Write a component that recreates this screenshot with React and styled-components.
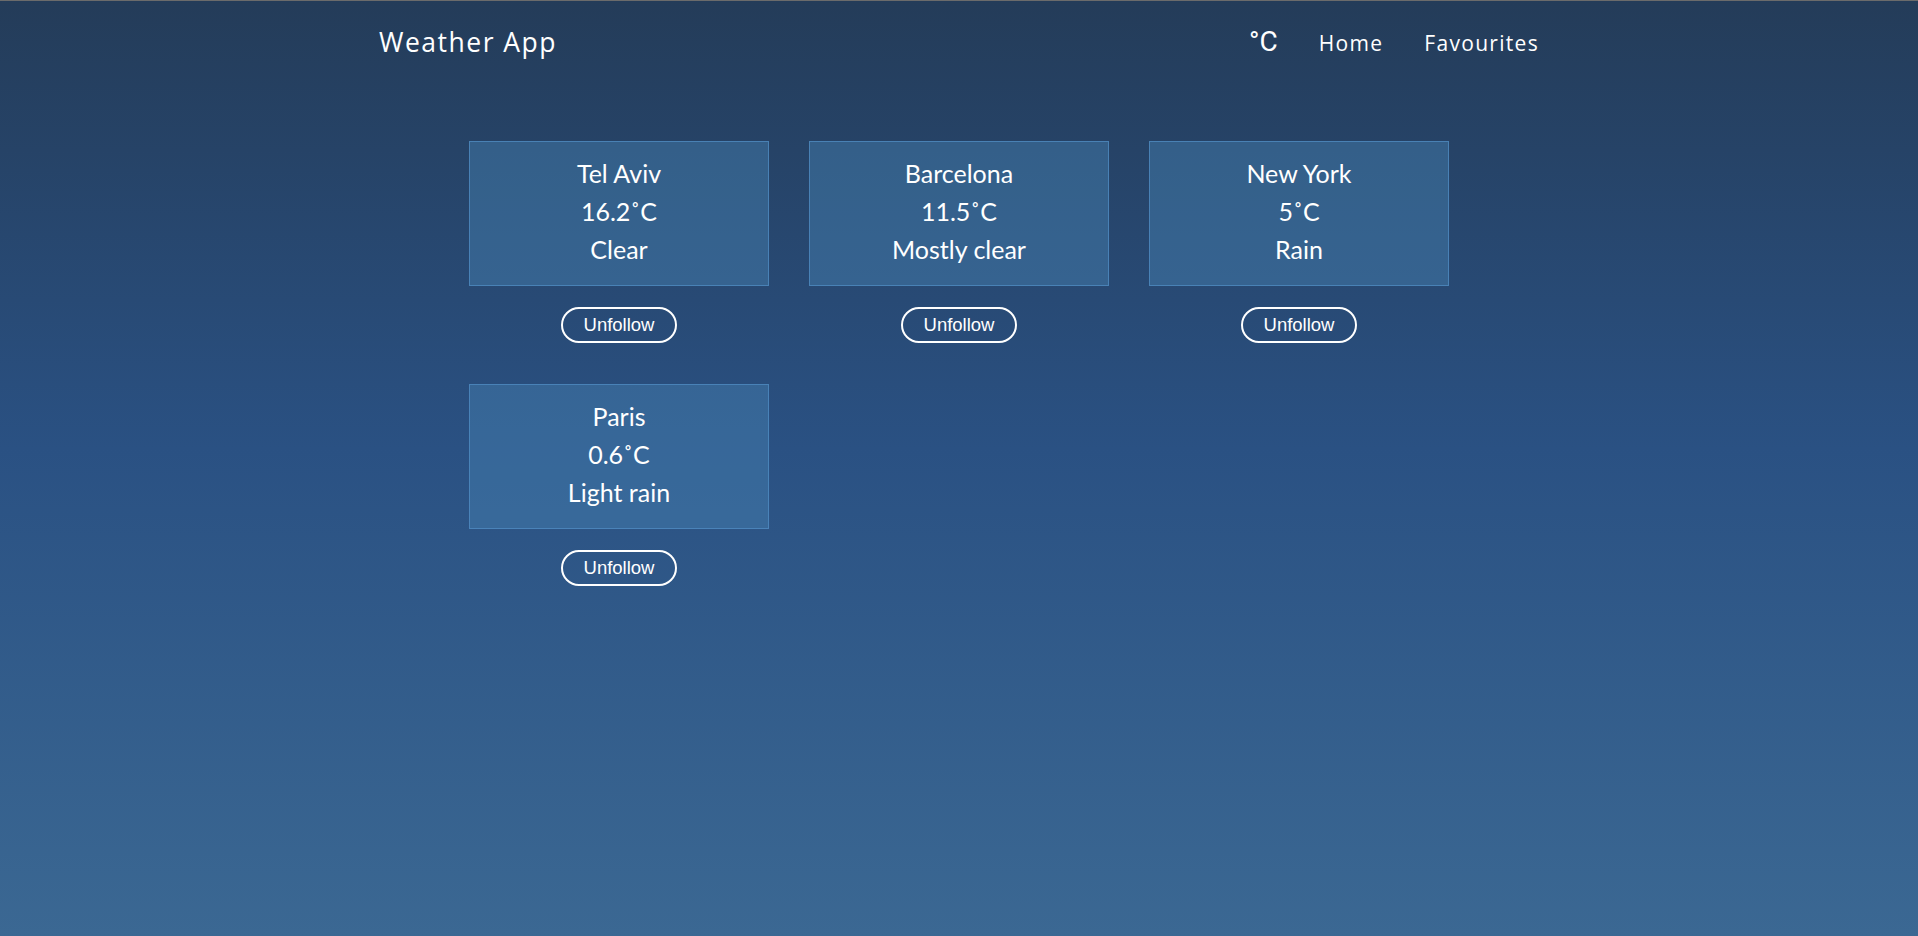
import React from 'react';
import styled, { createGlobalStyle } from 'styled-components';

const GlobalStyle = createGlobalStyle`
  html, body {
    margin: 0;
    padding: 0;
  }
  body {
    min-height: 100vh;
    border-top: 1px solid #6b6b6b;
    box-sizing: border-box;
    background: linear-gradient(180deg, #243c59 0%, #2a5183 48%, #3b6893 100%);
    background-attachment: fixed;
    color: #fff;
    font-family: 'Lato', 'Noto Sans', sans-serif;
  }
`;

const cities = [
  { name: 'Tel Aviv', temp: '16.2', text: 'Clear' },
  { name: 'Barcelona', temp: '11.5', text: 'Mostly clear' },
  { name: 'New York', temp: '5', text: 'Rain' },
  { name: 'Paris', temp: '0.6', text: 'Light rain' },
];

const App = () => {
  return (
    <>
      <GlobalStyle />
      <StyledHeader>
        <StyledLogo>Weather App</StyledLogo>
        <StyledNav>
          <StyledUnit>°C</StyledUnit>
          <StyledLink>Home</StyledLink>
          <StyledLink>Favourites</StyledLink>
        </StyledNav>
      </StyledHeader>
      <StyledGrid>
        {cities.map(city => (
          <StyledItem key={city.name}>
            <StyledCard>
              <StyledLine>{city.name}</StyledLine>
              <StyledLine>{city.temp}˚C</StyledLine>
              <StyledLine>{city.text}</StyledLine>
            </StyledCard>
            <StyledButton>Unfollow</StyledButton>
          </StyledItem>
        ))}
      </StyledGrid>
    </>
  );
};

export default App;

export const StyledHeader = styled.header`
  width: 1160px;
  margin: 0 auto;
  height: 82px;
  padding-top: 2px;
  display: flex;
  align-items: center;
  justify-content: space-between;
  box-sizing: border-box;
  font-family: 'Open Sans', sans-serif;
`;

export const StyledLogo = styled.div`
  font-size: 26.5px;
  letter-spacing: 1.5px;
  margin-top: -2px;
`;

export const StyledNav = styled.nav`
  display: flex;
  align-items: center;
  gap: 41px;
`;

export const StyledUnit = styled.span`
  font-family: 'Roboto', sans-serif;
  font-size: 28px;
  font-weight: 400;
  margin-top: -4px;
`;

export const StyledLink = styled.span`
  font-size: 21px;
  letter-spacing: 1.3px;
`;

export const StyledGrid = styled.main`
  width: 980px;
  margin: 58px auto 0;
  display: grid;
  grid-template-columns: repeat(3, 300px);
  column-gap: 40px;
  row-gap: 41px;
`;

export const StyledItem = styled.div`
  display: flex;
  flex-direction: column;
  align-items: center;
  gap: 21px;
`;

export const StyledCard = styled.div`
  width: 300px;
  height: 145px;
  box-sizing: border-box;
  padding-top: 12px;
  background: rgba(70, 130, 180, 0.45);
  border: 1px solid rgba(80, 140, 195, 0.75);
  display: flex;
  flex-direction: column;
  align-items: center;
`;

export const StyledLine = styled.div`
  font-size: 25px;
  line-height: 38px;
`;

export const StyledButton = styled.button`
  width: 116px;
  height: 36px;
  border: 2px solid #fff;
  border-radius: 18px;
  background: transparent;
  color: #fff;
  font-family: 'Liberation Sans', Arial, sans-serif;
  font-size: 18.5px;
  padding: 0;
  cursor: pointer;
`;
